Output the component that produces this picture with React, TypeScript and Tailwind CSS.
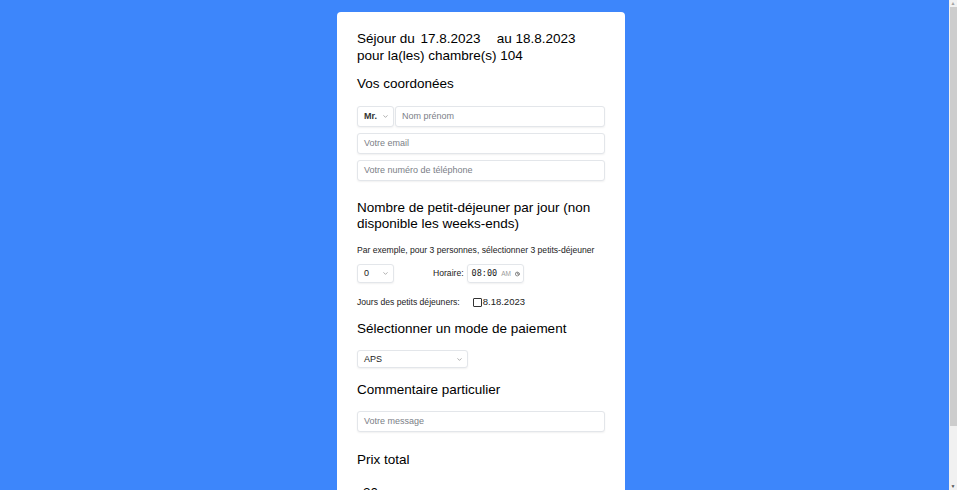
import { ChevronDown, Clock } from "lucide-react";

function Field({ placeholder, className = "" }: { placeholder: string; className?: string }) {
  return (
    <div
      className={`h-[21px] flex items-center px-[6px] rounded-[3px] border border-[#e3e6ea] bg-white shadow-[0_1px_2px_rgba(0,0,0,0.06)] text-[9px] text-[#7b8087] ${className}`}
    >
      {placeholder}
    </div>
  );
}

function Select({ value, className = "" }: { value: string; className?: string }) {
  return (
    <div
      className={`flex items-center justify-between pl-[6px] pr-[4px] rounded-[3px] border border-[#e3e6ea] bg-white shadow-[0_1px_2px_rgba(0,0,0,0.06)] text-[9px] text-[#222] ${className}`}
    >
      <span>{value}</span>
      <ChevronDown className="w-[7px] h-[7px] text-[#777]" strokeWidth={2} />
    </div>
  );
}

function Scrollbar() {
  return (
    <div className="w-[8px] h-full bg-[#f1f1f1] flex flex-col items-center">
      <div className="h-[7px] flex items-center justify-center text-[5px] leading-none text-[#a3a3a3]">▲</div>
      <div className="w-[7px] h-[419px] ml-[1px] bg-[#cdcdcd]" />
      <div className="flex-1" />
      <div className="h-[8px] flex items-center justify-center text-[5px] leading-none text-[#505050]">▼</div>
    </div>
  );
}

export default function App() {
  return (
    <div
      className="h-[490px] overflow-hidden flex bg-[#3d86fb] text-black"
      style={{ fontFamily: '"Liberation Sans", Arial, sans-serif' }}
    >
      <div className="flex-1 flex justify-center pl-[13px] pt-[12px] overflow-hidden">
        <div className="w-[288px] bg-white rounded-[4px] px-[20px] pt-[18px] pb-[40px] self-start">
          {/* Séjour */}
          <div className="text-[13.5px] leading-[17px]">
            <div>
              <span>Séjour du</span> <span className="ml-[2px]">17.8.2023</span>
              <span className="ml-[16px]">au</span> <span>18.8.2023</span>
            </div>
            <div>pour la(les) chambre(s) 104</div>
          </div>

          {/* Coordonnées */}
          <h2 className="mt-[11px] text-[13.5px] leading-[17px]">Vos coordonées</h2>
          <div className="mt-[14px] flex flex-col gap-[6px]">
            <div className="flex gap-[1px]">
              <Select value="Mr." className="w-[37px] h-[21px] font-bold text-[#333]" />
              <Field placeholder="Nom prénom" className="flex-1" />
            </div>
            <Field placeholder="Votre email" />
            <Field placeholder="Votre numéro de téléphone" />
          </div>

          {/* Petit-déjeuner */}
          <h2 className="mt-[19px] text-[13.5px] leading-[16px]">
            Nombre de petit-déjeuner par jour (non disponible les weeks-ends)
          </h2>
          <p className="mt-[13px] text-[8.6px] leading-[11px] text-[#222] whitespace-nowrap">
            Par exemple, pour 3 personnes, sélectionner 3 petits-déjeuner
          </p>
          <div className="mt-[8px] flex items-center">
            <Select value="0" className="w-[37px] h-[19px]" />
            <span className="ml-[39px] text-[8.6px] text-[#222]">Horaire:</span>
            <div className="ml-[3px] w-[57px] h-[19px] flex items-center pl-[4px] pr-[3px] gap-[4px] rounded-[3px] border border-[#e3e6ea] shadow-[0_1px_2px_rgba(0,0,0,0.06)]">
              <span className="text-[8.5px] text-[#222]" style={{ fontFamily: '"DejaVu Sans Mono", monospace' }}>
                08:00
              </span>
              <span className="text-[6.5px] text-[#9a9a9a]">AM</span>
              <Clock className="ml-auto w-[10px] h-[10px] text-[#222]" strokeWidth={2.5} />
            </div>
          </div>
          <div className="mt-[12px] flex items-center text-[8.6px] text-[#222]">
            <span>Jours des petits déjeuners:</span>
            <span className="ml-[13px] w-[9px] h-[9px] border border-[#333] rounded-[1px]" />
            <span className="ml-[1px] text-[9.5px]">8.18.2023</span>
          </div>

          {/* Paiement */}
          <h2 className="mt-[11px] text-[13.5px] leading-[17px]">Sélectionner un mode de paiement</h2>
          <Select value="APS" className="mt-[13px] w-[111px] h-[18px]" />

          {/* Commentaire */}
          <h2 className="mt-[13px] text-[13.5px] leading-[17px]">Commentaire particulier</h2>
          <Field placeholder="Votre message" className="mt-[13px]" />

          {/* Prix */}
          <h2 className="mt-[19px] text-[13.5px] leading-[17px]">Prix total</h2>
          <p className="mt-[16px] text-[13.5px] leading-[17px] pl-[6px]">20 euros</p>
          <div className="mt-[20px] h-[28px] w-[120px] rounded-[3px] bg-[#3d86fb]" />
        </div>
      </div>
      <Scrollbar />
    </div>
  );
}
